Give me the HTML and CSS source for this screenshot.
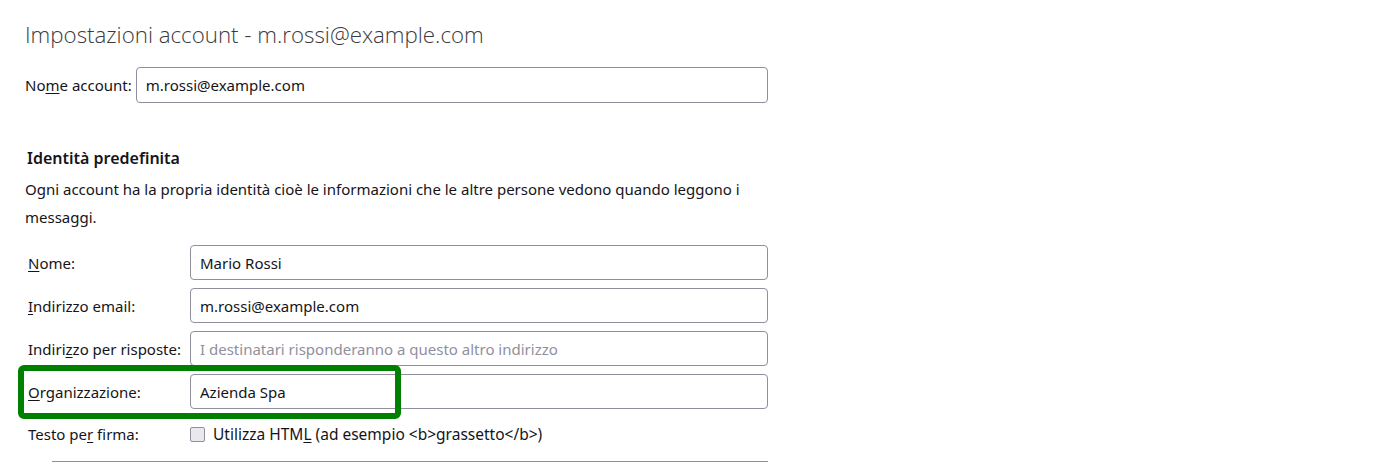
FILE: index.html
```html
<!DOCTYPE html>
<html lang="it">
<head>
<meta charset="utf-8">
<title>Impostazioni account</title>
<link rel="stylesheet" href="styles.css">
</head>
<body>
<main class="page">
  <h1 class="title">Impostazioni account - m.rossi@example.com</h1>

  <div class="account-row">
    <label class="account-label">No<u>m</u>e account:</label>
    <input class="field account-field" type="text" value="m.rossi@example.com">
  </div>

  <section class="identity">
    <h2 class="section-title">Identità predefinita</h2>
    <p class="desc">Ogni account ha la propria identità cioè le informazioni che le altre persone vedono quando leggono i messaggi.</p>

    <div class="rows">
      <div class="row">
        <label class="row-label"><u>N</u>ome:</label>
        <input class="field" type="text" value="Mario Rossi">
      </div>
      <div class="row">
        <label class="row-label"><u>I</u>ndirizzo email:</label>
        <input class="field" type="text" value="m.rossi@example.com">
      </div>
      <div class="row">
        <label class="row-label">Indiri<u>z</u>zo per risposte:</label>
        <input class="field" type="text" placeholder="I destinatari risponderanno a questo altro indirizzo">
      </div>
      <div class="row">
        <label class="row-label"><u>O</u>rganizzazione:</label>
        <input class="field" type="text" value="Azienda Spa">
        <span class="highlight"></span>
      </div>
      <div class="row row-check">
        <label class="row-label">Testo pe<u>r</u> firma:</label>
        <label class="check"><span class="box"></span><span class="check-text">Utilizza HTM<u>L</u> (ad esempio &lt;b&gt;grassetto&lt;/b&gt;)</span></label>
      </div>
      <div class="sig"></div>
    </div>
  </section>
</main>
</body>
</html>
```

FILE: styles.css
```css
* { box-sizing: border-box; }

html, body {
  margin: 0;
  padding: 0;
  background: #ffffff;
}

body {
  font-family: "Noto Sans", "Open Sans", sans-serif;
  font-size: 15px;
  color: #15141a;
  overflow: hidden;
}

.page {
  width: 768px;
  padding: 20px 0 0 25px;
}

.title {
  margin: 0;
  font-family: "Open Sans", "Noto Sans", sans-serif;
  font-weight: 300;
  font-size: 22.3px;
  line-height: 30px;
  color: #3a3a3f;
}

u {
  text-decoration: underline;
  text-underline-offset: 2px;
}

.account-row {
  display: flex;
  align-items: center;
  gap: 4px;
  margin-top: 17px;
}

.account-label {
  white-space: nowrap;
}

.field {
  height: 35px;
  border: 1px solid #8f8f9d;
  border-radius: 4px;
  padding: 0 9px;
  font-family: "Noto Sans", "Open Sans", sans-serif;
  font-size: 15px;
  color: #15141a;
  background: #ffffff;
  outline: none;
}

.account-field {
  height: 36px;
  flex: 1;
}

.field::placeholder {
  color: #8f8f9d;
}

.identity {
  margin-top: 44px;
}

.section-title {
  margin: 0 0 0 2px;
  font-size: 16px;
  font-weight: 600;
  line-height: 22px;
}

.desc {
  margin: 6px 0 0;
  font-size: 15px;
  line-height: 28px;
}

.rows {
  margin-top: 14px;
  display: flex;
  flex-direction: column;
  gap: 8px;
}

.row {
  display: grid;
  grid-template-columns: 162px 1fr;
  align-items: center;
  padding-left: 3px;
  position: relative;
}

.row-label {
  white-space: nowrap;
}

.highlight {
  position: absolute;
  left: -7px;
  top: -9px;
  width: 383px;
  height: 54px;
  border: 6px solid #008000;
  border-radius: 6px;
  pointer-events: none;
}

.row-check {
  height: 22px;
  margin-top: 6px;
}

.check {
  display: flex;
  align-items: center;
  gap: 8px;
}

.check-text {
  font-size: 15.5px;
}

.box {
  flex: none;
  width: 15px;
  height: 15px;
  border: 1px solid #8f8f9d;
  border-radius: 2px;
  background: #e9e9ed;
}

.sig {
  margin-left: 27px;
  height: 1px;
  border-top: 1px solid #8f8f9d;
  margin-top: 8px;
}
```
